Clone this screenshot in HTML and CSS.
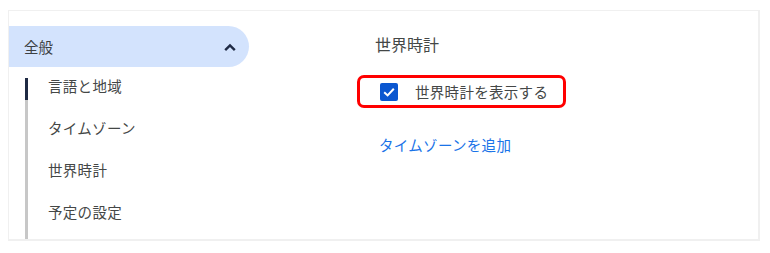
FILE: index.html
```html
<!doctype html>
<html lang="ja">
    <head>
        <meta charset="utf-8">
        <meta name="viewport" content="width=device-width, initial-scale=1.0"/>
        <title>設定</title>

		<link rel="stylesheet" href="styles.css">
    </head>
    <body>

		<div class="settings">
			<nav class="nav">
				<div class="group">
					<span>全般</span>
					<svg class="chevron" width="14" height="10" viewBox="0 0 14 10">
						<path d="M2.2 8.2 L7 3.4 L11.8 8.2" fill="none" stroke="#1f2a44" stroke-width="2.4"/>
					</svg>
				</div>
				<ul class="sub">
					<li class="active">言語と地域</li>
					<li>タイムゾーン</li>
					<li>世界時計</li>
					<li>予定の設定</li>
				</ul>
			</nav>

			<main class="pane">
				<h2>世界時計</h2>
				<label class="option">
					<span class="check">
						<svg width="18" height="18" viewBox="0 0 18 18">
							<path d="M4.2 9.2 L7.6 12.4 L13.8 5.8" fill="none" stroke="#fff" stroke-width="2"/>
						</svg>
					</span>
					<span>世界時計を表示する</span>
				</label>
				<a class="link" href="#">タイムゾーンを追加</a>
			</main>
		</div>

    </body>
</html>
```

FILE: styles.css
```css
/*----- Reset -----*/

*{
	box-sizing: border-box;
}

html, body{
	padding: 0;
	margin: 0;
	-webkit-font-smoothing: antialiased;
	font-family: Roboto, "Noto Sans CJK JP", sans-serif;
	font-size: 14.5px;
	color: #444746;
	background: #fff;
}

body{
	padding: 10px 10px 0 8px;
}

/*----- layout -----*/

.settings{
	display: flex;
	height: 231px;
	border: 2px solid #f0f0f0;
	border-left-width: 1px;
	border-top-width: 1px;
}

/*----- nav -----*/

.nav{
	width: 240px;
	display: flex;
	flex-direction: column;
	padding-top: 15px;
}

.group{
	display: flex;
	align-items: center;
	justify-content: space-between;
	height: 41px;
	padding: 0 12px 0 15px;
	background: #d3e3fd;
	border-radius: 0 21px 21px 0;
	color: #3c4043;
}

.sub{
	flex: 1;
	list-style: none;
	margin: 0 0 0 16px;
	padding: 0;
	position: relative;
}

.sub::before{
	content: "";
	position: absolute;
	left: 0;
	top: 11px;
	bottom: 0;
	width: 3px;
	background: #c7c7c7;
}

.sub li{
	height: 42px;
	line-height: 42px;
	padding-left: 23px;
	position: relative;
	letter-spacing: 0.3px;
}

.sub li.active::before{
	content: "";
	position: absolute;
	left: 0;
	top: 11px;
	height: 22px;
	width: 3px;
	background: #1f2a44;
}

/*----- pane -----*/

.pane{
	flex: 1;
	padding: 23px 0 0 126px;
	display: flex;
	flex-direction: column;
	align-items: flex-start;
}

.pane h2{
	margin: 0;
	font-size: 16px;
	font-weight: normal;
	line-height: 24px;
	color: #444746;
}

.option{
	display: flex;
	align-items: center;
	gap: 17px;
	margin: 17px 0 0 -18px;
	width: 209px;
	height: 33px;
	padding-left: 20px;
	border: 3px solid #ff0000;
	border-radius: 7px;
	letter-spacing: 0.3px;
}

.check{
	display: flex;
	width: 18px;
	height: 18px;
	background: #0b57d0;
	border-radius: 2px;
}

.link{
	margin-top: 26px;
	margin-left: 4px;
	color: #1a73e8;
	text-decoration: none;
	letter-spacing: 0.3px;
}
```
